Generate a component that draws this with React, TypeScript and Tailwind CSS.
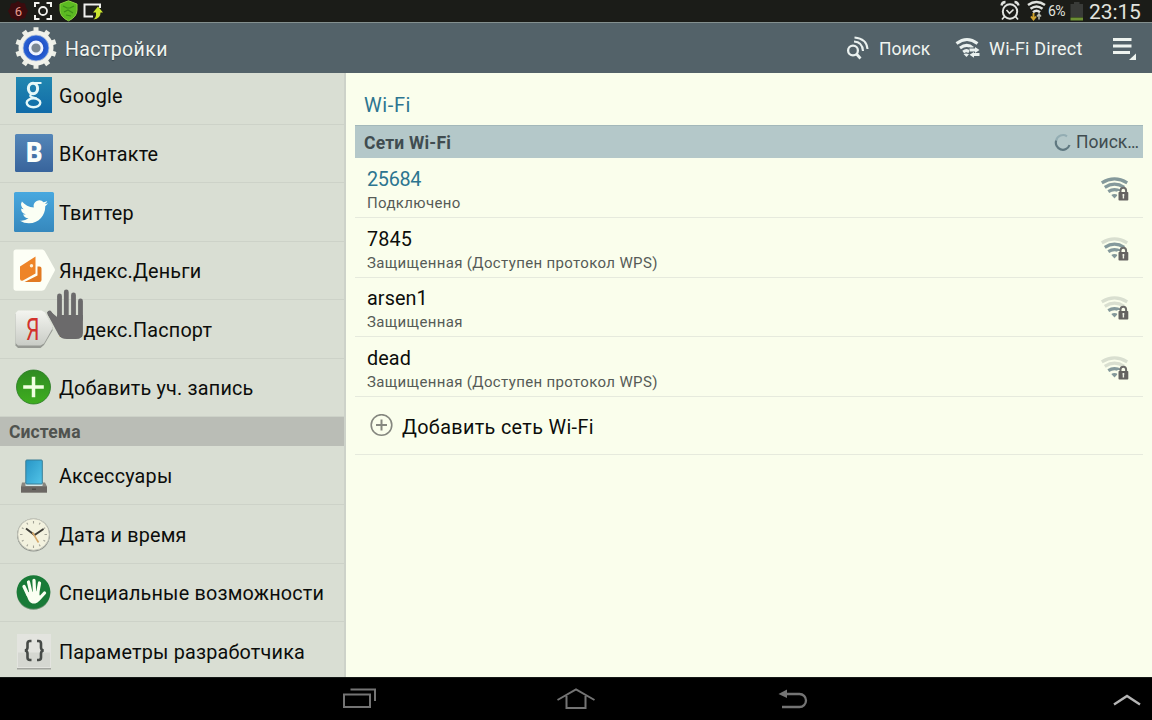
import type { ReactNode } from 'react';
import clsx from 'clsx';

interface Network {
  name: string;
  status: string;
  level: number;
  connected?: boolean;
}

const networks: Network[] = [
  { name: '25684', status: 'Подключено', level: 3, connected: true },
  { name: '7845', status: 'Защищенная (Доступен протокол WPS)', level: 2 },
  { name: 'arsen1', status: 'Защищенная', level: 1 },
  { name: 'dead', status: 'Защищенная (Доступен протокол WPS)', level: 1 },
];

function GoogleIcon() {
  return (
    <svg width="42" height="42" viewBox="0 0 42 42">
      <defs>
        <linearGradient id="google" x1="0" y1="0" x2="0" y2="1">
          <stop offset="0" stopColor="#2187b0" />
          <stop offset="1" stopColor="#116ba8" />
        </linearGradient>
      </defs>
      <rect x="3" y="3" width="36" height="36" fill="url(#google)" />
      <g fill="none" stroke="#e6f8f8">
        <ellipse cx="20" cy="14.500" rx="4.600" ry="5.200" strokeWidth="3" />
        <ellipse cx="20.500" cy="28.800" rx="6.800" ry="4.400" strokeWidth="2.400" />
        <path d="M20 9h8.500M18.500 19.700c-2 1.800-1.600 2.800.8 3.500l4.400 1.300" strokeWidth="2.200" />
      </g>
    </svg>
  );
}

function VkIcon() {
  return (
    <svg width="42" height="42" viewBox="0 0 42 42">
      <defs>
        <linearGradient id="vk" x1="0" y1="0" x2="0" y2="1">
          <stop offset="0" stopColor="#5486b8" />
          <stop offset="1" stopColor="#38649c" />
        </linearGradient>
      </defs>
      <rect x="2" y="2" width="38" height="38" rx="1.500" fill="url(#vk)" />
      <text x="13" y="30" textLength="16.500" lengthAdjust="spacingAndGlyphs" fontFamily="Roboto, sans-serif" fontSize="27.500" fontWeight="900" fill="#fbfffb">
        B
      </text>
    </svg>
  );
}

function TwitterIcon() {
  return (
    <svg width="42" height="42" viewBox="0 0 42 42">
      <defs>
        <linearGradient id="twitter" x1="0" y1="0" x2="0" y2="1">
          <stop offset="0" stopColor="#48a8df" />
          <stop offset="1" stopColor="#3688bd" />
        </linearGradient>
      </defs>
      <rect x="1" y="1" width="40" height="40" rx="1.500" fill="url(#twitter)" />
      <path
        transform="translate(7 6.800) scale(1.170)"
        fill="#fbfff4"
        d="M23.95 4.57a10 10 0 0 1-2.82.78 4.96 4.96 0 0 0 2.16-2.72c-.95.55-2 .95-3.13 1.18a4.92 4.92 0 0 0-8.38 4.48C7.69 8.1 4.07 6.13 1.64 3.16a4.92 4.92 0 0 0 1.52 6.57 4.9 4.9 0 0 1-2.23-.61v.06a4.92 4.92 0 0 0 3.95 4.83 5 5 0 0 1-2.21.08 4.94 4.94 0 0 0 4.6 3.42A9.87 9.87 0 0 1 0 19.54a14 14 0 0 0 7.55 2.21c9.05 0 14-7.5 14-13.98 0-.21 0-.42-.02-.63a9.94 9.94 0 0 0 2.46-2.55z"
      />
    </svg>
  );
}

function YandexMoneyIcon() {
  return (
    <svg width="42" height="42" viewBox="0 0 42 42">
      <path d="M3 .5h25.500c1.500 0 2.500.5 3.300 1.700L41.500 19.500c.6 1 .6 1.800 0 2.800L32 40c-.8 1.200-1.800 1.700-3.300 1.700H3c-1.500 0-2.500-1-2.500-2.500V3C.5 1.500 1.500.5 3 .5z" fill="#fdfff6" />
      <path d="M7 17.500 22.500 7.500v17L10 31.500q-3 1-3-2z" fill="#ee8427" />
      <path d="M24.500 17.500h2q2 0 2 2V31q0 2-2 2H11.500l13-6.500z" fill="#e27a22" />
      <circle cx="18.500" cy="16.800" r="1.700" fill="#fdf0d8" />
    </svg>
  );
}

function YandexPassportIcon() {
  return (
    <svg width="42" height="42" viewBox="0 0 42 42">
      <defs>
        <linearGradient id="passport" x1="0" y1="0" x2="0" y2="1">
          <stop offset="0" stopColor="#f4f5f0" />
          <stop offset="1" stopColor="#c9ccc6" />
        </linearGradient>
      </defs>
      <path d="M5 3.500h23.500l3.500 2 7.500 14v3L31 37l-3.500 3H5l-2.500-2.500V6z" fill="#969993" />
      <path d="M5 2.500h23.500l3.500 2 7.500 14v2L31 35.500l-3.500 2H5L2.500 35V5z" fill="url(#passport)" />
      <text x="13" y="31.500" fontFamily="Roboto, sans-serif" fontSize="31" textLength="13.500" lengthAdjust="spacingAndGlyphs" fill="#d2322c">
        Я
      </text>
    </svg>
  );
}

function AddAccountIcon() {
  return (
    <svg width="42" height="42" viewBox="0 0 42 42">
      <defs>
        <linearGradient id="add" x1="0" y1="0" x2="0" y2="1">
          <stop offset="0" stopColor="#2f8b22" />
          <stop offset="1" stopColor="#3fae1f" />
        </linearGradient>
      </defs>
      <circle cx="20.500" cy="21" r="17" fill="url(#add)" stroke="#2a7a25" strokeWidth=".8" />
      <path d="M20.500 10.700v20.600M10.200 21h20.600" stroke="#f0ffe0" strokeWidth="3.500" />
    </svg>
  );
}

function DockIcon() {
  return (
    <svg width="42" height="42" viewBox="0 0 42 42">
      <defs>
        <linearGradient id="dock" x1="0" y1="0" x2="1" y2="1">
          <stop offset="0" stopColor="#2795c6" />
          <stop offset="1" stopColor="#52c4e8" />
        </linearGradient>
      </defs>
      <path d="M9 28.500h23l2 4v6H8v-6z" fill="#88867f" />
      <path d="M8 32.500h26v6H8z" fill="#6b6763" />
      <path d="M12.500 29h17v3h-17z" fill="#d3e8e8" />
      <rect x="12.800" y="6" width="16.500" height="24" rx="1" fill="url(#dock)" stroke="#397d95" />
      <rect x="19" y="34.500" width="4" height="1.500" fill="#4f4c48" />
    </svg>
  );
}

function ClockIcon() {
  return (
    <svg width="42" height="42" viewBox="0 0 42 42">
      <circle cx="20.500" cy="22" r="16.500" fill="#8f938c" />
      <circle cx="20.500" cy="21.500" r="15.800" fill="#f3f2df" stroke="#c3c5ba" />
      <g stroke="#a3a397" strokeWidth="1.100">
        <path d="M20.500 8v2.500M20.500 32.500V35M7 21.500h2.500M31.500 21.500H34M13.800 9.800l1 1.800M27.200 9.800l-1 1.800M8.800 14.800l1.800 1M32.200 14.800l-1.800 1M8.800 28.200l1.800-1M32.200 28.200l-1.800-1M13.800 33.200l1-1.800M27.200 33.200l-1-1.800" />
      </g>
      <path d="m13 15.500 8.500 6.500 9-6" fill="none" stroke="#3b3a34" strokeWidth="1.900" />
      <path d="m19.500 19.500 6 10" stroke="#d6a868" strokeWidth="1.500" />
    </svg>
  );
}

function AccessibilityIcon() {
  return (
    <svg width="42" height="42" viewBox="0 0 42 42">
      <circle cx="20.500" cy="22" r="16.800" fill="#6f9273" />
      <circle cx="20.500" cy="21" r="16.800" fill="#197a37" />
      <g stroke="#fbfff2" strokeWidth="3.300" strokeLinecap="round">
        <path d="m15 24-4-8.500M18 22l-2.500-11M21.500 22 21 9.500M24.500 23l2-11M26 28l5.500-6" />
      </g>
      <path d="M13 21.500 26 20l.500 4 1.500 2c-1 4-3.500 6.500-7 6.500-4 0-6-2.500-8-11z" fill="#fbfff2" />
    </svg>
  );
}

function DeveloperIcon() {
  return (
    <svg width="42" height="42" viewBox="0 0 42 42">
      <rect x="4" y="5" width="34" height="34.500" fill="#a3a5a0" />
      <rect x="4" y="4" width="34" height="34" fill="#e3e4df" />
      <rect x="5" y="22.500" width="32" height="14.500" fill="#d5d7d1" />
      <g fill="none" stroke="#474b48" strokeWidth="2.600">
        <path d="M18.500 11h-1.500q-2.500 0-2.500 2.500v4q0 2.500-2.500 3 2.500.5 2.500 3v4q0 2.500 2.500 2.500h1.500" />
        <path d="M24 11h1.500q2.500 0 2.500 2.500v4q0 2.500 2.500 3-2.500.5-2.500 3v4q0 2.500-2.500 2.500H24" />
      </g>
    </svg>
  );
}

function HandCursor() {
  return (
    <svg width="40" height="53" viewBox="0 0 40 53">
      <g stroke="#6b6a6b" strokeWidth="4.800" strokeLinecap="round">
        <path d="M14.500 32V9M21.300 30V5M28.500 30V8M35.500 32V14M4.500 26l9 14" />
      </g>
      <path d="M12.100 28h25.800v18q0 6-7 6h-9q-6 0-8.500-4.500L3 28l3-3 6.100 5z" fill="#6b6a6b" />
    </svg>
  );
}

function GearIcon() {
  return (
    <svg width="42" height="42" viewBox="0 0 42 42">
      <defs>
        <radialGradient id="gear">
          <stop offset=".4" stopColor="#1c49bd" />
          <stop offset="1" stopColor="#2a64d8" />
        </radialGradient>
      </defs>
      <g stroke="#eceee6" strokeWidth="5">
        <path d="M21 .3v41.400M8.830 4.250l24.340 33.500M1.310 14.600l39.380 12.800M1.310 27.400l39.380-12.800M8.830 37.750l24.340-33.500" />
      </g>
      <circle cx="21" cy="21" r="17.500" fill="#f1f2eb" />
      <circle cx="21" cy="21" r="13" fill="url(#gear)" stroke="#b9c5d8" strokeWidth=".8" />
      <circle cx="21" cy="21" r="6" fill="#7b8793" stroke="#eef3ff" strokeWidth="2.800" />
    </svg>
  );
}

function SignalIcon({ level }: { level: number }) {
  const arcs = ['M8.300 15.700q6.200-4 12.400 0', 'M4.800 11.300q9.700-6.300 19.400 0', 'M1.800 6.800q12.700-7.800 25.400 0'];
  return (
    <svg width="30" height="26" viewBox="0 0 30 26">
      <path d="m14.500 22.500-3.200-3.500q3.200-2.200 6.400 0z" fill="#83989a" />
      {arcs.map((d, i) => (
        <path key={d} d={d} fill="none" strokeWidth="3.200" stroke={i < level ? '#84999b' : '#d9dfd0'} />
      ))}
      <path d="M17.300 15h3q0-4 3-4t3.500 4h1.500v10h-11z" fill="#fafeec" />
      <path d="M20.500 17v-2.500q0-2.800 2.800-2.800t2.800 2.800V17" fill="none" stroke="#6c6b69" strokeWidth="2" />
      <rect x="18.500" y="16" width="9.800" height="8.500" rx=".8" fill="#656361" />
      <path d="M23.400 18v4.500M22.500 19h1.800" stroke="#eff2e6" strokeWidth="1.400" />
    </svg>
  );
}

function StatusBar() {
  return (
    <div className="flex h-[22px] shrink-0 items-center justify-between bg-[#1b1c18] text-[#e1e3df]">
      <svg width="110" height="22" viewBox="0 0 110 22">
        <path d="m18 1 3 2 4 .5 1 4 2 3.500-2 4-1 3-4 1-3 2-3-2-4-1-1-3-2-4 2-3.500 1-4 4-.5z" fill="#3b0b0e" />
        <text x="18.500" y="15.500" textAnchor="middle" fontFamily="Roboto, sans-serif" fontSize="13" fill="#e79a8c">
          6
        </text>
        <path d="M35 7V3h4.500M46.500 3H51v4M51 15v4h-4.500M39.500 19H35v-4" fill="none" stroke="#f0f0ed" strokeWidth="2" />
        <circle cx="43" cy="11" r="4" fill="none" stroke="#f0f0ed" strokeWidth="1.800" />
        <path d="M68.500.8 77 4v6q0 7-8.500 10.800Q60 17 60 10V4z" fill="#5cba22" stroke="#8bcf42" />
        <path d="m63 6 4 2h3l4-2M64 12l4-2 5 3M66 15l5 1" fill="none" stroke="#3c8f1a" strokeWidth="1.200" />
        <path d="M93 16.500h-8.500v-12H100V8" fill="none" stroke="#f0f0ed" strokeWidth="2" />
        <path d="M93.500 19.500q3-2 2.500-7h-3L98 6.500l5 6h-2.500q.3 6-7 7z" fill="#cbe62f" />
      </svg>
      <div className="flex items-center pr-[10px] font-[Roboto,sans-serif]">
        <svg width="50" height="22" viewBox="0 0 50 22">
          <g fill="none" stroke="#e1e3df">
            <circle cx="11" cy="11.500" r="7.200" strokeWidth="2" />
            <path d="m7.500 10 3 3.300 4-3.800M5.500 16.500l-2.500 3M16.500 16.500l2.500 3" strokeWidth="1.700" />
            <path d="M2.500 5.500Q3 2 6.500 2M19.500 5.500Q19 2 15.500 2" strokeWidth="2.300" />
            <path d="M29 5q8.500-6 17 0M31.500 8.700q6-4.500 12 0M34 12.200q3.500-2.800 7 0" strokeWidth="2.500" />
          </g>
          <path d="M34.500 13v6M32 16.500l2.500 3 2.500-3" fill="none" stroke="#d0a32c" strokeWidth="1.900" />
          <path d="M40 19.500v-5M38 16.500l2-2.500 2 2.500" fill="none" stroke="#b8bbb0" strokeWidth="1.500" />
        </svg>
        <span className="-ml-px w-[21px] whitespace-nowrap text-[14px] leading-[20px] tracking-[-0.500px]">6%</span>
        <svg width="16" height="22" viewBox="0 0 16 22">
          <path d="M1.500 4H5V2h5.500v2H14v13H1.500z" fill="#393b38" />
          <path d="M1.500 17.500H14v3H1.500z" fill="#6d9034" />
        </svg>
        <span className="ml-[4px] w-[53px] whitespace-nowrap pt-[2px] text-[21px] leading-[20px] tracking-[-0.100px]">23:15</span>
      </div>
    </div>
  );
}

function ActionBar() {
  return (
    <header className="flex h-[51px] shrink-0 items-center border-t border-[#84908f] bg-[#536269] pl-[15px] text-[#f0f4f0]">
      <GearIcon />
      <h1 className="ml-2 grow pt-[3px] text-[19.500px] tracking-[0.400px] [text-shadow:0_1px_1px_#34434a]">Настройки</h1>
      <svg width="24" height="24" viewBox="0 0 24 24" fill="none" stroke="#eaf1ef">
        <circle cx="7" cy="14.500" r="4.900" strokeWidth="2.300" />
        <path d="m10.500 18 4 4.500" strokeWidth="2.700" />
        <path d="M8 5.500q8.500.5 9 9.500M8.500 1.500Q20.500 2.500 21.500 13" strokeWidth="2.100" />
      </svg>
      <span className="ml-[9px] w-[53px] whitespace-nowrap pt-[2px] text-[17.500px]">Поиск</span>
      <svg className="ml-[23px]" width="26" height="22" viewBox="0 0 26 22">
        <g fill="none" stroke="#eaf1ef" strokeWidth="3">
          <path d="M1.500 6.500q10.500-8 21 0M5 11q7-5.300 13 0M8.200 15q3.500-2.700 6 0" />
        </g>
        <path d="m8.500 17 3 3 2.500-2.800q-3-1.500-5.500-.2z" fill="#eaf1ef" />
        <path d="M14 10.500h11v9H14z" fill="#536269" />
        <path d="M14.500 11.500H20v-1.500l4.500 3-4.500 3V14.500h-5.500zM24.500 16H19v-1l-4.500 2.700 4.500 3V19h5.500z" fill="#eaf1ef" />
      </svg>
      <span className="ml-[8px] w-[98px] whitespace-nowrap pt-px text-[18px] tracking-[0.200px]">Wi-Fi Direct</span>
      <svg className="ml-[25px] mr-[14px]" width="26" height="26" viewBox="0 0 26 26">
        <path d="M1 4.500h18.500M1 11h18.500M1 17.500h17" stroke="#eef3ef" strokeWidth="3" />
        <path d="M24 18.500V25h-7z" fill="#eef3ef" />
      </svg>
    </header>
  );
}

function SidebarRow({ icon, children }: { icon: ReactNode; children: ReactNode }) {
  return (
    <li className="flex h-[58.500px] shrink-0 items-center border-b border-[#cdd2c8] pl-[13px]">
      {icon}
      <span className="ml-[4px] whitespace-nowrap pt-[4px] text-[19.800px] tracking-[0.200px]">{children}</span>
    </li>
  );
}

function Sidebar() {
  return (
    <aside className="relative flex h-full w-[346px] shrink-0 flex-col overflow-hidden border-r-2 border-[#cdd2c9] bg-[#d9ded3] text-[#0c0d0b]">
      <ul className="-mt-[7px] flex shrink-0 flex-col">
        <SidebarRow icon={<GoogleIcon />}>Google</SidebarRow>
        <SidebarRow icon={<VkIcon />}>ВКонтакте</SidebarRow>
        <SidebarRow icon={<TwitterIcon />}>Твиттер</SidebarRow>
        <SidebarRow icon={<YandexMoneyIcon />}>Яндекс.Деньги</SidebarRow>
        <SidebarRow icon={<YandexPassportIcon />}>Яндекс.Паспорт</SidebarRow>
        <SidebarRow icon={<AddAccountIcon />}>Добавить уч. запись</SidebarRow>
      </ul>
      <h2 className="flex h-[28.500px] shrink-0 items-center bg-[#babdb6] pl-[9px] pt-[2px] text-[17.500px] font-bold tracking-[0.100px] text-[#50534f]">Система</h2>
      <ul className="flex shrink-0 flex-col pt-px">
        <SidebarRow icon={<DockIcon />}>Аксессуары</SidebarRow>
        <SidebarRow icon={<ClockIcon />}>Дата и время</SidebarRow>
        <SidebarRow icon={<AccessibilityIcon />}>Специальные возможности</SidebarRow>
        <SidebarRow icon={<DeveloperIcon />}>Параметры разработчика</SidebarRow>
      </ul>
      <div className="absolute left-[45px] top-[214px]">
        <HandCursor />
      </div>
    </aside>
  );
}

function NetworkRow({ network }: { network: Network }) {
  return (
    <li className="flex h-[59.500px] items-center justify-between border-b border-[#e6eadd] pl-[12px] pr-[13px] pt-[3px]">
      <div className="pt-[4px]">
        <div className={clsx('text-[19.800px] leading-[24px]', network.connected ? 'tracking-[-0.300px] text-[#2c7590]' : 'text-[#0c0d0b]', !network.connected && 'tracking-[0.100px]')}>
          {network.name}
        </div>
        <div className="text-[15px] leading-[22px] tracking-[0.350px] text-[#565b57]">{network.status}</div>
      </div>
      <SignalIcon level={network.level} />
    </li>
  );
}

function WifiPanel() {
  return (
    <main className="h-full grow bg-[#fafeec] pl-[9px] pr-[9px]">
      <h2 className="flex h-[52px] items-center pl-[9px] pt-[12px] text-[20px] tracking-[0.600px] text-[#2c7590]">Wi-Fi</h2>
      <div className="flex h-[33px] items-center justify-between border-t border-[#a3b8ba] bg-[#b4c8c9] pl-[9px] pr-[4px] text-[#404c50]">
        <h3 className="pt-[2px] text-[17.500px] font-bold tracking-[0.200px]">Сети Wi-Fi</h3>
        <div className="flex items-center gap-[4px]">
          <svg width="18" height="18" viewBox="0 0 18 18" fill="none" strokeWidth="2.200">
            <path d="M13 3.300A7 7 0 0 0 2.200 7.500" stroke="#93adb3" />
            <path d="M2.200 7.500A7 7 0 0 0 15.500 12" stroke="#5f7880" />
          </svg>
          <span className="pt-px text-[17.500px]">Поиск…</span>
        </div>
      </div>
      <ul className="pt-[0.500px]">
        {networks.map((network) => (
          <NetworkRow key={network.name} network={network} />
        ))}
      </ul>
      <div className="flex h-[58.500px] items-center border-b border-[#e6eadd] pl-[15px] pt-[2px]">
        <svg width="24" height="24" viewBox="0 0 24 24" fill="none" stroke="#85877f">
          <circle cx="11.500" cy="11" r="10.300" strokeWidth="1.600" />
          <path d="M11.500 5.500v11M6 11h11" strokeWidth="2" />
        </svg>
        <span className="ml-[8px] whitespace-nowrap pt-[3px] text-[19.800px] tracking-[0.350px] text-[#0c0d0b]">Добавить сеть Wi-Fi</span>
      </div>
    </main>
  );
}

function NavBar() {
  return (
    <nav className="flex h-[43px] shrink-0 items-center border-t border-[#151917] bg-black">
      <svg className="ml-[342px]" width="36" height="24" viewBox="0 0 36 24" fill="none" stroke="#747474" strokeWidth="2">
        <path d="M2 7.500h26v12.500H2zM8.500 2.500H33V14" />
      </svg>
      <svg className="ml-[179px]" width="38" height="24" viewBox="0 0 38 24" fill="none" stroke="#747474" strokeWidth="2">
        <path d="M.5 13 19 2.500 37.500 13M9.500 9v12h19V9" />
      </svg>
      <svg className="ml-[182px]" width="32" height="24" viewBox="0 0 32 24" fill="none" stroke="#747474" strokeWidth="2.300">
        <path d="M6 7h16.500a6.500 6.500 0 0 1 0 13H5" />
        <path d="M10 2.500v8.500L1.500 7z" fill="#747474" stroke="none" />
      </svg>
      <svg className="ml-auto mr-[11px]" width="28" height="24" viewBox="0 0 28 24" fill="none" stroke="#b5b5b5" strokeWidth="2.400">
        <path d="m1 17.500 13-8.500 13 8.500" />
      </svg>
    </nav>
  );
}

export default function App() {
  return (
    <div className="flex h-[720px] w-[1152px] flex-col overflow-hidden bg-black font-[Roboto,sans-serif]">
      <StatusBar />
      <ActionBar />
      <div className="flex h-[604px] shrink-0">
        <Sidebar />
        <WifiPanel />
      </div>
      <NavBar />
    </div>
  );
}
